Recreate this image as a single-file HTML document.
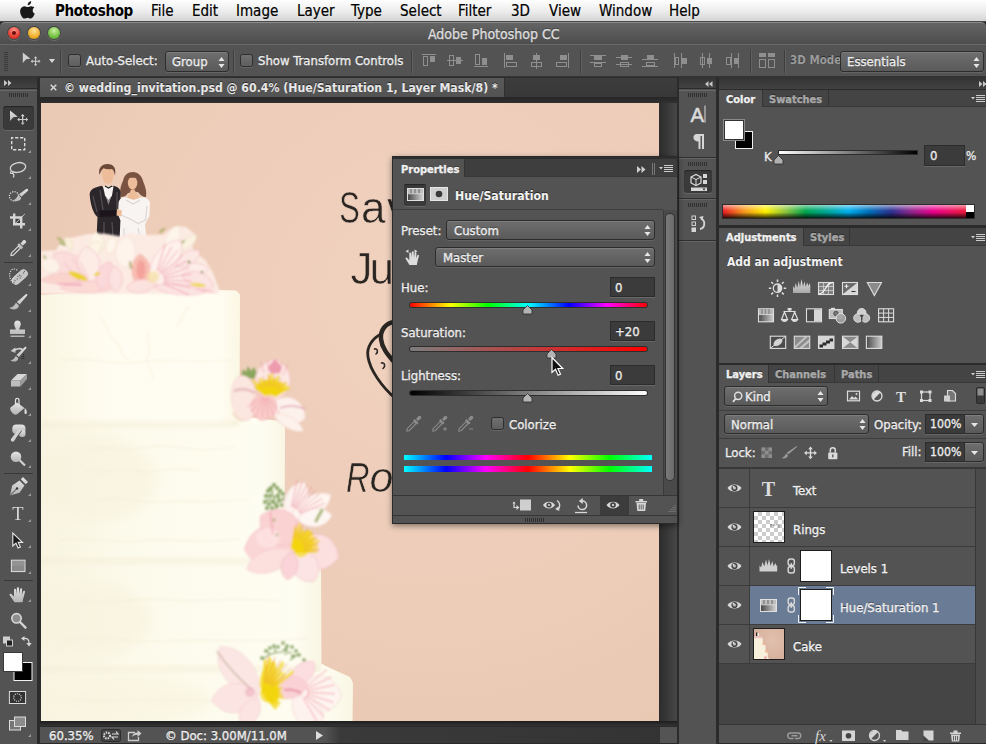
<!DOCTYPE html>
<html><head><meta charset="utf-8"><title>Adobe Photoshop CC</title>
<style>
*{box-sizing:border-box;margin:0;padding:0}
html,body{width:986px;height:744px;overflow:hidden;background:#282828}
body{position:relative;font-family:"DejaVu Sans Condensed","DejaVu Sans","Liberation Sans",sans-serif;font-size:13px;color:#ececec}
div,span,svg,i,b{position:absolute;display:block}
.t{white-space:nowrap;line-height:1;text-shadow:0 -1px 0 rgba(0,0,0,.5);-webkit-text-stroke:.35px currentColor}
.b{font-weight:bold}
#menubar{left:0;top:0;width:986px;height:22px;background:linear-gradient(#fefefe,#ececec 55%,#d4d4d4);border-bottom:1px solid #4a4a4a}
#menubar .t{color:#000;font-size:15px;top:4px;text-shadow:none;-webkit-text-stroke:.2px #000}
#menubar .b{letter-spacing:-.35px;-webkit-text-stroke:0}
.b{-webkit-text-stroke:0}
#titlebar{left:0;top:22px;width:986px;height:22px;background:linear-gradient(#646464,#4d4d4d);border-top:1px solid #8a8a8a;border-radius:5px 5px 0 0}
.tl{width:12px;height:12px;border-radius:6px;top:4px;box-shadow:0 0 0 1px rgba(0,0,0,.35),0 1px 0 1px rgba(255,255,255,.15)}
#optbar{left:0;top:44px;width:986px;height:33px;background:#535353;border-top:1px solid #6a6a6a;border-bottom:1px solid #333}
.vsep{width:2px;background:#3e3e3e;border-right:1px solid #616161}
.cb{width:13px;height:13px;border:1px solid #2e2e2e;border-radius:2.5px;background:linear-gradient(#707070,#5e5e5e);box-shadow:0 1px 0 rgba(255,255,255,.12)}
.dd{border:1px solid #2d2d2d;border-radius:3px;background:linear-gradient(#6e6e6e,#5a5a5a);box-shadow:0 1px 0 rgba(255,255,255,.1),inset 0 1px 0 rgba(255,255,255,.12)}
.dd .t{top:3px}
.ud{width:7px;height:11px}

.grip{width:20px;height:4px;background:repeating-linear-gradient(90deg,#303030 0 1px,transparent 1px 2px)}
.hsep{height:2px;background:#303030;border-bottom:1px solid #646464}
.tabbar{background:#444;border-bottom:1px solid #383838}
.tab{height:100%;top:0;border-right:1px solid #353535}
.tab.on{background:#535353;height:calc(100% + 1px)}
.tab .t{top:4px;font-size:11px;font-weight:bold;color:#a8a8a8}
.tab.on .t{color:#f0f0f0}
.pnl{background:#535353}
.fld{background:#3b3b3b;border:1px solid #2c2c2c;box-shadow:0 1px 0 rgba(255,255,255,.12)}

.row{left:0;width:256px;height:39px;border-bottom:1px solid #3c3c3c;background:#535353}
.row .eyec{left:0;top:0;width:31px;height:38px;border-right:1px solid #3c3c3c;background:#535353}
.row .t{top:15px;font-size:13px;color:#f0f0f0}
.eye{left:8px;top:14px}
.th{border:1px solid #1e1e1e}
</style></head><body>
<!-- ===== MENU BAR ===== -->
<div id="menubar">
<svg style="left:20px;top:1px" width="16" height="19" viewBox="0 0 16 19"><path fill="#1a1a1a" d="M11.2 0.3c.1 1-.3 2-.9 2.700-.7.800-1.700 1.300-2.600 1.200-.1-1 .4-2 .9-2.600.7-.8 1.800-1.300 2.600-1.300zM14.400 6.500c-1 .6-1.700 1.600-1.700 2.900 0 1.500.9 2.700 2.100 3.200-.3.900-.7 1.800-1.300 2.700-.8 1.100-1.600 2.300-2.900 2.300-1.200 0-1.600-.8-3-.8s-1.900.8-3 .8c-1.300 0-2.200-1.200-3-2.400C.3 13.300-.5 10 .7 7.700c.8-1.600 2.300-2.500 3.800-2.500 1.300 0 2.300.9 3.100.9.800 0 2.100-1 3.700-.9 1.300.1 2.400.6 3.100 1.300z"/></svg>
<span class="t b" style="left:55px">Photoshop</span>
<span class="t" style="left:151px">File</span>
<span class="t" style="left:192px">Edit</span>
<span class="t" style="left:236px">Image</span>
<span class="t" style="left:297px">Layer</span>
<span class="t" style="left:351px">Type</span>
<span class="t" style="left:400px">Select</span>
<span class="t" style="left:458px">Filter</span>
<span class="t" style="left:511px">3D</span>
<span class="t" style="left:549px">View</span>
<span class="t" style="left:599px">Window</span>
<span class="t" style="left:669px">Help</span>
</div>
<!-- ===== TITLE BAR ===== -->
<div id="titlebar">
<i class="tl" style="left:8px;background:radial-gradient(circle at 50% 30%,#ff9a8f,#e33e32 60%,#b8261c)"></i>
<i style="left:12px;top:8px;width:4px;height:4px;border-radius:2px;background:#6b0f08"></i>
<i class="tl" style="left:28px;background:radial-gradient(circle at 50% 30%,#ffe29a,#f0b02c 60%,#c98710)"></i>
<i class="tl" style="left:48px;background:radial-gradient(circle at 50% 30%,#c9f0a0,#74c043 60%,#4d9a26)"></i>
<span class="t" style="left:428px;top:4px;font-size:14px;color:#dcdcdc">Adobe Photoshop CC</span>
</div>
<!-- ===== OPTIONS BAR ===== -->
<div id="optbar">
<i style="left:4px;top:7px;width:4px;height:19px;background:repeating-linear-gradient(#3a3a3a 0 1px,transparent 1px 2px)"></i>
<svg style="left:22px;top:7px" width="20" height="16" viewBox="0 0 20 16"><path fill="#cfcfcf" d="M.8 .6l7.600 6.200-4.300.5L.8 11z"/><path fill="#cfcfcf" transform="translate(13.600 8.900) scale(.9) translate(-22.700 -119.200)" d="M22.700 114l1.900 2.200h-1.300v2.700h2.700v-1.300l2.200 1.900-2.200 1.900v-1.300h-2.700v2.700h1.300l-1.900 2.200-1.900-2.200h1.300v-2.700h-2.700v1.300l-2.200-1.900 2.200-1.900v1.300h2.700v-2.700h-1.300z"/></svg>
<svg style="left:49px;top:14px" width="6" height="4"><path fill="#d8d8d8" d="M0 0h6L3 4z"/></svg>
<i class="vsep" style="left:60px;top:5px;height:23px"></i>
<i class="cb" style="left:68px;top:9px"></i>
<span class="t" style="left:86px;top:9px">Auto-Select:</span>
<div class="dd" style="left:165px;top:6px;width:64px;height:21px"><span class="t" style="left:6px">Group</span>
<svg class="ud" style="left:52px;top:5px" viewBox="0 0 7 11"><path fill="#e6e6e6" d="M3.500 0L6.500 4H.5zM3.500 11L6.500 7H.5z"/></svg></div>
<i class="vsep" style="left:233px;top:5px;height:23px"></i>
<i class="cb" style="left:240px;top:9px"></i>
<span class="t" style="left:258px;top:9px">Show Transform Controls</span>
<i class="vsep" style="left:411px;top:5px;height:23px"></i>
<svg id="alsvg" style="left:415px;top:6px" width="365" height="20" viewBox="415 50 365 20"><path d="M422 53.5L436 53.5" stroke="#8f8f8f" stroke-width="1" fill="none"/><rect x="423.5" y="55.5" width="4.0" height="9.0" fill="none" stroke="#8f8f8f" stroke-width="1"/><rect x="430" y="55" width="5.0" height="6.0" fill="#8f8f8f"/><path d="M447 59.5L463 59.5" stroke="#8f8f8f" stroke-width="1" fill="none"/><rect x="449.5" y="54.5" width="4.0" height="10.0" fill="none" stroke="#8f8f8f" stroke-width="1"/><rect x="456" y="56" width="5.0" height="7.0" fill="#8f8f8f"/><path d="M474 65.5L488 65.5" stroke="#8f8f8f" stroke-width="1" fill="none"/><rect x="475.5" y="53.5" width="4.0" height="10.0" fill="none" stroke="#8f8f8f" stroke-width="1"/><rect x="482" y="57" width="5.0" height="7.0" fill="#8f8f8f"/><path d="M504.5 52L504.5 67" stroke="#8f8f8f" stroke-width="1" fill="none"/><rect x="506" y="54" width="7.0" height="5.0" fill="#8f8f8f"/><rect x="506.5" y="61.5" width="10.0" height="4.0" fill="none" stroke="#8f8f8f" stroke-width="1"/><path d="M536.5 52L536.5 68" stroke="#8f8f8f" stroke-width="1" fill="none"/><rect x="533" y="54" width="7.0" height="5.0" fill="#8f8f8f"/><rect x="531.5" y="61.5" width="10.0" height="4.0" fill="none" stroke="#8f8f8f" stroke-width="1"/><path d="M568.5 52L568.5 67" stroke="#8f8f8f" stroke-width="1" fill="none"/><rect x="560" y="54" width="7.0" height="5.0" fill="#8f8f8f"/><rect x="556.5" y="61.5" width="10.0" height="4.0" fill="none" stroke="#8f8f8f" stroke-width="1"/><path d="M590 54.5L606 54.5" stroke="#8f8f8f" stroke-width="1" fill="none"/><path d="M590 61.5L606 61.5" stroke="#8f8f8f" stroke-width="1" fill="none"/><rect x="594" y="55" width="8.0" height="4.0" fill="#8f8f8f"/><rect x="594.5" y="62.5" width="7.0" height="3.0" fill="none" stroke="#8f8f8f" stroke-width="1"/><path d="M616 56.5L632 56.5" stroke="#8f8f8f" stroke-width="1" fill="none"/><path d="M616 63.5L632 63.5" stroke="#8f8f8f" stroke-width="1" fill="none"/><rect x="621" y="54" width="7.0" height="5.0" fill="#8f8f8f"/><rect x="620.5" y="61.5" width="8.0" height="4.0" fill="none" stroke="#8f8f8f" stroke-width="1"/><path d="M642 58.5L658 58.5" stroke="#8f8f8f" stroke-width="1" fill="none"/><path d="M642 65.5L658 65.5" stroke="#8f8f8f" stroke-width="1" fill="none"/><rect x="647" y="54" width="7.0" height="4.0" fill="#8f8f8f"/><rect x="646.5" y="61.5" width="8.0" height="3.0" fill="none" stroke="#8f8f8f" stroke-width="1"/><path d="M674.5 52L674.5 67" stroke="#8f8f8f" stroke-width="1" fill="none"/><path d="M681.5 52L681.5 67" stroke="#8f8f8f" stroke-width="1" fill="none"/><rect x="675.5" y="56.5" width="3.0" height="7.0" fill="none" stroke="#8f8f8f" stroke-width="1"/><rect x="682" y="57" width="5.0" height="6.0" fill="#8f8f8f"/><path d="M702.5 52L702.5 67" stroke="#8f8f8f" stroke-width="1" fill="none"/><path d="M709.5 52L709.5 67" stroke="#8f8f8f" stroke-width="1" fill="none"/><rect x="700.5" y="56.5" width="4.0" height="7.0" fill="none" stroke="#8f8f8f" stroke-width="1"/><rect x="707" y="57" width="5.0" height="6.0" fill="#8f8f8f"/><path d="M731.5 52L731.5 67" stroke="#8f8f8f" stroke-width="1" fill="none"/><path d="M738.5 52L738.5 67" stroke="#8f8f8f" stroke-width="1" fill="none"/><rect x="726.5" y="56.5" width="4.0" height="7.0" fill="none" stroke="#8f8f8f" stroke-width="1"/><rect x="734" y="57" width="4.0" height="6.0" fill="#8f8f8f"/><rect x="759" y="52" width="7.0" height="4.0" fill="#8f8f8f"/><rect x="759.5" y="58.5" width="6.0" height="8.0" fill="none" stroke="#8f8f8f" stroke-width="1"/><rect x="768" y="52" width="7.0" height="4.0" fill="#8f8f8f"/><rect x="768.5" y="58.5" width="6.0" height="8.0" fill="none" stroke="#8f8f8f" stroke-width="1"/></svg>
<i class="vsep" style="left:580px;top:5px;height:23px"></i>
<i class="vsep" style="left:750px;top:5px;height:23px"></i>
<i class="vsep" style="left:784px;top:5px;height:23px"></i>
<span class="t b" style="left:790px;top:10px;font-size:11.500px;color:#9b9b9b;width:49.500px;overflow:hidden">3D Mode:</span>
<div class="dd" style="left:840px;top:6px;width:144px;height:21px"><span class="t" style="left:6px">Essentials</span>
<svg class="ud" style="left:132px;top:5px" viewBox="0 0 7 11"><path fill="#e6e6e6" d="M3.500 0L6.500 4H.5zM3.500 11L6.500 7H.5z"/></svg></div>
</div>

<!-- ===== DOCUMENT WINDOW ===== -->
<div id="doc" style="left:40px;top:77px;width:637px;height:667px;background:#2c2c2c">
<i style="left:0;top:0;width:637px;height:20px;background:linear-gradient(#3c3c3c,#383838);border-top:1px solid #2e2e2e"></i>
<div style="left:0;top:1px;width:465px;height:19px;background:linear-gradient(#595959,#535353);border-right:1px solid #303030">
<svg style="left:10px;top:6px" width="7" height="7"><path d="M.7.7l5.600 5.600M6.300.7L.7 6.300" stroke="#d8d8d8" stroke-width="1.500" fill="none"/></svg>
<span class="t b" style="left:24px;top:4px;font-size:12.200px;color:#e8e8e8">© wedding_invitation.psd @ 60.4% (Hue/Saturation 1, Layer Mask/8) *</span>
</div>
<i style="left:0;top:20px;width:637px;height:6px;background:linear-gradient(#262626,#303030)"></i>
<!-- scroll track -->
<i style="left:619px;top:26px;width:18px;height:624px;background:linear-gradient(90deg,#2c2c2c,#474747)"></i>
<i style="left:0;top:644px;width:637px;height:6px;background:linear-gradient(#1e1e1e,#383838)"></i>
<!-- status bar -->
<div id="status" style="left:0;top:649px;width:637px;height:18px;background:linear-gradient(90deg,#535353 0,#535353 285px,#3a3a3a 300px,#333 100%);border-top:1px solid #2a2a2a;border-bottom:1px solid #2a2a2a">
<span class="t" style="left:9px;top:2px;font-size:13px">60.35%</span>
<svg style="left:61px;top:2px" width="20" height="13"><rect x=".5" y=".5" width="19" height="12" rx="2" fill="#444" stroke="#2c2c2c"/><circle cx="6" cy="6.500" r="3" fill="none" stroke="#ddd" stroke-width="2" stroke-dasharray="1.500 1"/><path d="M11 5h6l-2-2.500M17 8h-6l2 2.500" fill="none" stroke="#ddd" stroke-width="1.200"/></svg>
<svg style="left:87px;top:1px" width="15" height="14"><path d="M8 4.500H1.500v8h10V9" fill="none" stroke="#ccc" stroke-width="1.300"/><path d="M5 9c.5-3 2.500-4.500 5.500-4.500V2L14.500 5.500 10.500 9V6.800C8 6.800 6.500 7.500 5 9z" fill="#ccc"/></svg>
<span class="t" style="left:125px;top:2px;font-size:13px">© Doc: 3.00M/11.0M</span>
<svg style="left:276px;top:4px" width="7" height="9"><path d="M0 0l7 4.500L0 9z" fill="#ddd"/></svg>
<i style="left:620px;top:0;width:17px;height:16px;background:#545454"></i>
</div>
<!-- canvas image -->
<svg id="cv" style="left:1px;top:26px" width="618" height="618" viewBox="41 103 618 618">
<defs>
<radialGradient id="bgg" cx="430" cy="300" r="560" gradientUnits="userSpaceOnUse"><stop offset="0" stop-color="#f0d2bf"/><stop offset=".6" stop-color="#edccb8"/><stop offset="1" stop-color="#e8c6b0"/></radialGradient>
<linearGradient id="ck" x1="0" y1="0" x2="1" y2="0"><stop offset="0" stop-color="#f8f4e1"/><stop offset=".35" stop-color="#fcfaeb"/><stop offset=".9" stop-color="#fefdf1"/><stop offset="1" stop-color="#f9f6e4"/></linearGradient>
<linearGradient id="ck1" x1="0" y1="0" x2="1" y2="0"><stop offset="0" stop-color="#faf6e3"/><stop offset=".35" stop-color="#fffdf1"/><stop offset=".9" stop-color="#fffdf2"/><stop offset="1" stop-color="#fbf7e4"/></linearGradient>
<radialGradient id="pk" cx=".3" cy=".5" r=".8"><stop offset="0" stop-color="#fdeae4"/><stop offset="1" stop-color="#f7c6c8"/></radialGradient>
<radialGradient id="pk2" cx=".4" cy=".5" r=".8"><stop offset="0" stop-color="#fbdcd8"/><stop offset="1" stop-color="#f6c2c6"/></radialGradient>
<radialGradient id="wh" cx=".4" cy=".5" r=".8"><stop offset="0" stop-color="#fff6ee"/><stop offset="1" stop-color="#fbe2de"/></radialGradient>
<filter id="b1" x="-20%" y="-20%" width="140%" height="140%"><feGaussianBlur stdDeviation=".8"/></filter>
<filter id="b2" x="-20%" y="-20%" width="140%" height="140%"><feGaussianBlur stdDeviation="2.500"/></filter>
<filter id="b3" x="-30%" y="-30%" width="160%" height="160%"><feGaussianBlur stdDeviation="6"/></filter>
<filter id="b0" x="-10%" y="-10%" width="120%" height="120%"><feGaussianBlur stdDeviation=".45"/></filter>
</defs>
<rect x="41" y="103" width="618" height="618" fill="url(#bgg)"/>
<g font-family="Liberation Sans,sans-serif" fill="#2b2523" stroke="#efd0bc" stroke-width=".6" filter="url(#b0)">
<text x="339.300" y="223.300" font-size="44" textLength="20.500" lengthAdjust="spacingAndGlyphs">S</text>
<text x="361" y="223.300" font-size="44" letter-spacing="1.500">ave the</text>
<text x="350.500" y="283.500" font-size="44">J</text>
<text x="369.500" y="283.500" font-size="44" letter-spacing="2">uly 12</text>
<text x="346" y="492" font-size="43" font-style="italic" textLength="23.500" lengthAdjust="spacingAndGlyphs">R</text>
<text x="369.500" y="492" font-size="43" font-style="italic" letter-spacing="1">obert</text>
</g>
<g fill="none" stroke="#2b2523" stroke-linecap="round" filter="url(#b0)"><path d="M394 322c-8 1-14 8-13 17 1 10 8 17 14 24" stroke-width="4.500"/><path d="M381 334c-8 4-15 13-13 23 2 13 14 30 27 41" stroke-width="2.800"/><path d="M374.500 349c3-1 4 3 1.500 5M381.500 363c3-1 4.500 3 1.500 5.500" stroke-width="1.600"/></g>
<path d="M41 664H322l8 4 20 9 3 6-.5 38H41z" fill="url(#ck)"/>
<path d="M41 555H286l30 5 5 6 .5 100-2 6H41z" fill="url(#ck)"/>
<path d="M41 416H240l40 5 5 6-.5 130-3 6H41z" fill="url(#ck)"/>
<path d="M41 295C90 291 180 289 236 290.500l4 4 -.5 126-2 4H41z" fill="url(#ck1)"/>
<g filter="url(#b2)" fill="none" stroke-linecap="round">
<path d="M41 424H238" stroke="#f1ead0" stroke-width="3" opacity=".8"/>
<path d="M41 561H284" stroke="#f1ead0" stroke-width="3" opacity=".8"/>
<path d="M41 669H320" stroke="#f1ead0" stroke-width="3" opacity=".8"/>
</g>
<g filter="url(#b3)"><ellipse cx="95" cy="480" rx="60" ry="40" fill="#f7f2dc" opacity=".6"/><ellipse cx="90" cy="620" rx="60" ry="35" fill="#f7f2dc" opacity=".6"/><ellipse cx="120" cy="700" rx="90" ry="22" fill="#f8f3de" opacity=".6"/></g>
<g fill="none" stroke="#f3ecd4" stroke-width="1.200" opacity=".55" filter="url(#b1)"><path d="M90 448c20-3 30 3 45 1s20-5 40-2 35 4 60 0M85 470c20 4 40-2 55 1s30-6 60 0M100 500c25-5 40 4 60 2s50 2 90-3M60 540c30-4 50 4 80 1s60 3 100-2M80 600c30 5 60-3 90 0s70-4 110 1M60 640c40-5 70 4 110 1s90 3 140-3M70 700c40 4 80-3 120 0s100-4 150 0M100 318c10 8 5 14 14 22s6 16 16 20M150 330c-8 10 4 16-2 26s8 14 4 24M60 360c30-4 50 6 80 2s60 2 90-2M190 306c-10 6-6 16-14 20"/></g>
<g filter="url(#b0)">
<path d="M121 197c-2-6 0-12 2-16 1-6 5-9 10-9s9 4 10 9c2 5 4 10 3 16-3 0-6-2-8-5l-10 1c-2 3-4 4-7 4z" fill="#7a5242"/>
<path d="M96.500 239l1-22c-4-3-7-12-7.800-22-.3-5 4-7.500 12-9.200l5.800 6 5.500-6c4 .8 7 2.500 7.500 6l.5 20-.5 27.200z" fill="#2a2529"/>
<path d="M93 196l4 16M100 190l3 20M117 192l0 18M104 222l0 14M112 222l1 14" stroke="#5c565c" stroke-width="1.300" fill="none" opacity=".8"/>
<path d="M99 210.500l20-.5v6l-19 1z" fill="#1c181c"/>
<path d="M103 186.500h10.500l-1.500 9-3.500 6-3.500-6z" fill="#f6f3f1"/><path d="M105.500 196l3 9 3-9-3 4z" fill="#8a8488"/>
<path d="M105 186l3.500 2 3.500-2" stroke="#222" stroke-width="1.200" fill="none"/>
<path d="M102 172c0-4 2.500-5.500 6-5.500s5.800 2 5.800 6c0 5-1.500 9-3 11h-5.500c-2-2-3.300-6-3.300-11.500z" fill="#edbd9a"/>
<path d="M99.500 175c-1.500-7 2-11 8-11s9 4 7.500 11.500c-.8-3.500-1.500-5.500-3-6.500-3 .5-6 .3-8.500-.8-1.800 1.500-3 3.800-4 6.800z" fill="#6a4838"/>
<ellipse cx="132.600" cy="183" rx="4.800" ry="6.400" fill="#edbd9a"/>
<path d="M127 199.500c1-4 3-7 4-10h3.500c1 3 4 6 6 10z" fill="#edbd9a"/>
<path d="M128 178c1-3 3-4 5-4s4 1.500 4.500 4c-3-.5-6-.5-9.500 0z" fill="#7a5242"/>
<path d="M118.500 204c0-5 4-7.500 8-6.500l7 2.500 7-2.500c4-1 9 1 9.500 6l-.5 12-4.500 9 1.500 15h-27l1-19-2.500-6z" fill="#f7f4f2"/>
<path d="M121 215l9 4 9 5M147 206l-1.500 14-8.500 4M126 200l7 4 7-4M124 228l0 10M138 228l2 10" stroke="#ddd6d3" stroke-width="1.200" fill="none"/>
<path d="M117 209l5 1.500-.8 6-4.700-1z" fill="#edbd9a"/>
</g>
<g filter="url(#b1)"><path d="M41 251L56 250.500 59.500 244 65 238 73 237.500 88 234 104 233.500 121 236.500 131 233 148 235 163 235 170 229 175 226 186 227 196 235 191 242 194 251 206 261 213 273 219 289V294H41z" fill="#fcebe3"/><path d="M0 0C5.5 -8.7 17.6 -8.4 22.0 0C17.6 8.4 5.5 8.7 0 0z" transform="translate(98 254) rotate(-95)" fill="#fdf6e8" stroke="#eee0c8" stroke-width="0.7" opacity="1"/><path d="M0 0C5.0 -8.1 16.0 -7.8 20.0 0C16.0 7.8 5.0 8.1 0 0z" transform="translate(88 258) rotate(-55)" fill="#fdf4e6" stroke="#eee0c8" stroke-width="0.7" opacity="1"/><path d="M0 0C4.5 -6.8 14.4 -6.6 18.0 0C14.4 6.6 4.5 6.8 0 0z" transform="translate(108 254) rotate(-70)" fill="#fef6ea" stroke="#eee0c8" stroke-width="0.7" opacity="1"/><path d="M0 0C3.5 -5.0 11.2 -4.8 14.0 0C11.2 4.8 3.5 5.0 0 0z" transform="translate(72 250) rotate(-115)" fill="#fbf0dc" stroke="#e8dcc0" stroke-width="0.7" opacity="1"/><path d="M0 0C7.8 -9.3 24.8 -9.0 31.0 0C24.8 9.0 7.8 9.3 0 0z" transform="translate(166 254) rotate(-66)" fill="#fdf4ea" stroke="#f0dcd0" stroke-width="0.7" opacity="1"/><path d="M0 0C5.5 -6.2 17.6 -6.0 22.0 0C17.6 6.0 5.5 6.2 0 0z" transform="translate(180 250) rotate(-42)" fill="#fbf2e2" stroke="#ecdcc8" stroke-width="0.7" opacity="1"/><path d="M0 0C8.0 -13.6 25.6 -13.2 32.0 0C25.6 13.2 8.0 13.6 0 0z" transform="translate(124 268) rotate(-85)" fill="#fef4ec" stroke="#f6d8d4" stroke-width="0.7" opacity="1"/><path d="M58 238l6 4M60 243l5 2M160 232l4-3M178 246l6-5M44 256l5 7M94 258l3 6M143 258l-2 8M130 262l1 6" stroke="#a6ae62" stroke-width="2" stroke-linecap="round"/><path d="M0 0C11.5 -16.1 36.8 -15.6 46.0 0C36.8 15.6 11.5 16.1 0 0z" transform="translate(90 282) rotate(-142)" fill="#fbdedb" stroke="#f3bcc4" stroke-width="0.7" opacity="1"/><path d="M0 0C9.0 -14.9 28.8 -14.4 36.0 0C28.8 14.4 9.0 14.9 0 0z" transform="translate(92 282) rotate(-100)" fill="#fdebe6" stroke="#f3bcc4" stroke-width="0.7" opacity="1"/><path d="M0 0C5.0 -9.9 16.0 -9.6 20.0 0C16.0 9.6 5.0 9.9 0 0z" transform="translate(41 262) rotate(20)" fill="#fdf2e8" stroke="#f0dcd0" stroke-width="0.7" opacity="1"/><path d="M0 0C11.0 -7.4 35.2 -7.2 44.0 0C35.2 7.2 11.0 7.4 0 0z" transform="translate(41 280) rotate(-4)" fill="#fad4cc" stroke="#f3bcc4" stroke-width="0.7" opacity="1"/><path d="M0 0C15.0 -7.4 48.0 -7.2 60.0 0C48.0 7.2 15.0 7.4 0 0z" transform="translate(60 288) rotate(-2)" fill="#fbdad4" stroke="#f3bcc4" stroke-width="0.7" opacity="1"/><path d="M0 0C7.5 -11.2 24.0 -10.8 30.0 0C24.0 10.8 7.5 11.2 0 0z" transform="translate(100 290) rotate(-70)" fill="#fbd8da" stroke="#f3bcc4" stroke-width="0.7" opacity="1"/><path d="M0 0C6.5 -9.3 20.8 -9.0 26.0 0C20.8 9.0 6.5 9.3 0 0z" transform="translate(116 292) rotate(-92)" fill="#fce2e0" stroke="#f3bcc4" stroke-width="0.7" opacity="1"/><path d="M64 262l16 20M72 258l16 22M80 262l8 16" stroke="#f3a6b8" stroke-width=".9" opacity=".7"/><ellipse cx="78" cy="276" rx="10" ry="3" transform="rotate(22 78 276)" fill="#eed232"/><ellipse cx="97" cy="274" rx="3" ry="1.600" transform="rotate(-20 97 274)" fill="#eed232"/><path d="M58 284l24 1" stroke="#f096b6" stroke-width="1.600" opacity=".85"/><path d="M0 0C9.0 -12.4 28.8 -12.0 36.0 0C28.8 12.0 9.0 12.4 0 0z" transform="translate(143 290) rotate(-95)" fill="#f8beb2" stroke="#f0a8a0" stroke-width="0.7" opacity="1"/><ellipse cx="141" cy="270" rx="4.500" ry="10" fill="#f39a94" opacity=".75"/><path d="M0 0C12.5 -14.9 40.0 -14.4 50.0 0C40.0 14.4 12.5 14.9 0 0z" transform="translate(150 280) rotate(-52)" fill="#fef2ec" stroke="#f3bcc4" stroke-width="0.7" opacity="1"/><path d="M0 0C14.5 -14.9 46.4 -14.4 58.0 0C46.4 14.4 14.5 14.9 0 0z" transform="translate(152 282) rotate(-14)" fill="#fdeeea" stroke="#f3bcc4" stroke-width="0.7" opacity="1"/><path d="M0 0C13.0 -7.4 41.6 -7.2 52.0 0C41.6 7.2 13.0 7.4 0 0z" transform="translate(154 287) rotate(5)" fill="#fce4e2" stroke="#f3bcc4" stroke-width="0.7" opacity="1"/><path d="M0 0C7.5 -8.7 24.0 -8.4 30.0 0C24.0 8.4 7.5 8.7 0 0z" transform="translate(156 284) rotate(172)" fill="#fce2de" stroke="#f3bcc4" stroke-width="0.7" opacity="1"/><path d="M0 0C8.5 -11.2 27.2 -10.8 34.0 0C27.2 10.8 8.5 11.2 0 0z" transform="translate(182 274) rotate(22)" fill="#fce4e2" stroke="#f3bcc4" stroke-width="0.7" opacity="1"/><path d="M0 0C7.0 -8.7 22.4 -8.4 28.0 0C22.4 8.4 7.0 8.7 0 0z" transform="translate(176 266) rotate(-32)" fill="#fce8e4" stroke="#f3bcc4" stroke-width="0.7" opacity="1"/><path d="M157.2 270.0L165.4 243.9M158.9 270.7L171.8 246.6M160.6 271.8L177.6 250.5M161.9 273.1L182.6 255.3M163.1 274.7L186.6 260.9M163.9 276.5L189.6 267.2M164.4 278.3L191.3 274.0M164.5 280.3L191.8 280.9M164.3 282.2L191.0 287.8M163.7 284.0L188.9 294.5" stroke="#ec8498" stroke-width="0.9" stroke-dasharray="2.500 1.500" fill="none" stroke-linecap="round"/><circle cx="153" cy="277" r="6" fill="#f6e2a8" opacity=".75"/><ellipse cx="198" cy="285" rx="8" ry="2" transform="rotate(8 198 285)" fill="#eed656" opacity=".9"/><path d="M196 289l18 3" stroke="#f2a0b4" stroke-width="1.200" opacity=".8"/><circle cx="189" cy="262" r="1.500" fill="#8a8a50"/><circle cx="202" cy="272" r="1.300" fill="#8a8a50"/></g>
<g filter="url(#b1)"><path d="M241 376l2-7 3 3 2-6 3 5 3-4 2 5 3-2-1 5-5 4z" fill="#8aa55c"/><ellipse cx="244" cy="398" rx="12.500" ry="22.500" transform="rotate(-6 244 398)" fill="#fce6e0" stroke="#f3cec8" stroke-width=".7"/><path d="M234 391c7-3 14-2 21 2" stroke="#d4929a" stroke-width="2.600" fill="none" opacity=".5"/><path d="M233 412c2 5 6 8 10 9" stroke="#e8c0a0" stroke-width="1.500" fill="none" opacity=".7"/><path d="M0 0C9.5 -18.6 30.4 -18.0 38.0 0C30.4 18.0 9.5 18.6 0 0z" transform="translate(270 404) rotate(22)" fill="#fdf1ec" stroke="#f2d0cc" stroke-width="0.7" opacity="1"/><path d="M0 0C8.5 -7.4 27.2 -7.2 34.0 0C27.2 7.2 8.5 7.4 0 0z" transform="translate(274 414) rotate(30)" fill="#fdf2ec" stroke="#f2d4cc" stroke-width="0.7" opacity="1"/><path d="M280 408c8-3 16-3 25 1" stroke="#dc98a8" stroke-width="1.500" fill="none" opacity=".8"/><path d="M0 0C10.8 -23.6 34.4 -22.8 43.0 0C34.4 22.8 10.8 23.6 0 0z" transform="translate(270 402) rotate(-83)" fill="#fce8e4" stroke="#f4c4cc" stroke-width="0.7" opacity="1"/><path d="M268 367l7-8 7 8-2 6-9 1z" fill="#ec92a8" opacity=".9"/><path d="M263.5 371.9L261.2 361.8M268.5 371.2L267.9 360.9M273.5 371.4L274.8 361.1M278.4 372.5L281.5 362.5M283.1 374.3L287.8 365.1" stroke="#ee96a8" stroke-width="0.8" stroke-dasharray="2.500 1.500" fill="none" stroke-linecap="round"/><path d="M0 0C7.2 -17.4 23.2 -16.8 29.0 0C23.2 16.8 7.2 17.4 0 0z" transform="translate(267 392) rotate(102)" fill="#f9ceca" stroke="#f0b0b4" stroke-width="0.7" opacity="1"/><path d="M268.8 397.9L279.1 412.7M267.6 398.5L273.8 415.4M266.4 398.8L268.0 416.7M265.2 398.7L262.0 416.5M264.0 398.4L256.4 414.7M262.9 397.7L251.3 411.5M262.1 396.8L247.3 407.1" stroke="#ee8ea0" stroke-width="0.8" stroke-dasharray="2.500 1.500" fill="none" stroke-linecap="round"/><ellipse cx="271" cy="388" rx="12" ry="8" fill="#f5dc3a" opacity=".75"/><path d="M265.4 395.1L255.5 386.8M266.0 394.6L253.4 380.7M266.6 394.0L259.0 382.9M267.3 393.6L259.9 378.8M268.1 393.3L263.7 380.2M268.9 393.1L266.5 380.3M269.7 393.0L268.8 375.4M270.5 393.0L272.1 374.4M271.3 393.2L274.6 378.9M272.1 393.4L278.5 376.4M272.9 393.7L279.3 382.0M273.6 394.2L282.0 382.7M274.2 394.7L285.6 383.0M274.7 395.3L286.8 386.0M275.2 396.0L289.1 387.9" stroke="#f3d50e" stroke-width="2.2" fill="none" stroke-linecap="round"/><path d="M263.1 388.2L256.9 379.3M266.1 386.7L262.6 376.4M269.4 386.0L268.8 375.2M272.7 386.3L275.1 375.8M275.8 387.5L281.1 378.1M278.5 389.5L286.1 381.9" stroke="#ee8a70" stroke-width="0.7" stroke-dasharray="2.500 1.500" fill="none" stroke-linecap="round"/></g>
<g filter="url(#b1)"><path d="M276 510l-2-12-3-8M274 498l6-6M273 492l-5-4M275 504l8-4M272 500l-6 0" stroke="#88a266" stroke-width="1.300" fill="none"/><circle cx="271" cy="488" r="2" fill="#86a264"/><circle cx="274" cy="485" r="2" fill="#86a264"/><circle cx="277" cy="488" r="2" fill="#86a264"/><circle cx="268" cy="491" r="2" fill="#86a264"/><circle cx="280" cy="491" r="2" fill="#86a264"/><circle cx="283" cy="494" r="2" fill="#86a264"/><circle cx="266" cy="496" r="2" fill="#86a264"/><circle cx="270" cy="496" r="2" fill="#86a264"/><circle cx="278" cy="496" r="2" fill="#86a264"/><circle cx="265" cy="502" r="2" fill="#86a264"/><circle cx="269" cy="504" r="2" fill="#86a264"/><circle cx="273" cy="502" r="2" fill="#86a264"/><circle cx="279" cy="500" r="2" fill="#86a264"/><circle cx="284" cy="499" r="2" fill="#86a264"/><circle cx="267" cy="508" r="2" fill="#86a264"/><circle cx="272" cy="508" r="2" fill="#86a264"/><circle cx="277" cy="506" r="2" fill="#86a264"/><circle cx="282" cy="505" r="2" fill="#86a264"/><circle cx="286" cy="507" r="2" fill="#86a264"/><path d="M0 0C10.0 -14.9 32.0 -14.4 40.0 0C32.0 14.4 10.0 14.9 0 0z" transform="translate(287 518) rotate(-64)" fill="#fdf3ee" stroke="#f2d4d0" stroke-width="0.7" opacity="1"/><path d="M0 0C11.5 -13.6 36.8 -13.2 46.0 0C36.8 13.2 11.5 13.6 0 0z" transform="translate(291 518) rotate(-30)" fill="#fef6f0" stroke="#f2d4d0" stroke-width="0.7" opacity="1"/><path d="M0 0C8.5 -12.4 27.2 -12.0 34.0 0C27.2 12.0 8.5 12.4 0 0z" transform="translate(298 520) rotate(-8)" fill="#fef6f2" stroke="#f2d4d0" stroke-width="0.7" opacity="1"/><path d="M291.6 506.3L297.2 480.9M293.2 506.7L302.2 482.4M294.7 507.4L307.0 484.5M296.1 508.3L311.4 487.3M297.3 509.4L315.4 490.6M298.4 510.6L318.9 494.5M299.4 511.9L321.8 498.8M300.1 513.4L324.1 503.5" stroke="#ea8094" stroke-width="0.9" stroke-dasharray="2.500 1.500" fill="none" stroke-linecap="round"/><path d="M316 521l6-11" stroke="#a9b872" stroke-width="3" stroke-linecap="round"/><path d="M0 0C14.0 -28.5 44.8 -27.6 56.0 0C44.8 27.6 14.0 28.5 0 0z" transform="translate(300 542) rotate(172)" fill="#fbd6d6" stroke="#f2bcc4" stroke-width="0.7" opacity="1"/><path d="M0 0C12.0 -23.6 38.4 -22.8 48.0 0C38.4 22.8 12.0 23.6 0 0z" transform="translate(302 540) rotate(-150)" fill="#fad2d2" stroke="#f2bcc4" stroke-width="0.7" opacity="1"/><path d="M0 0C12.5 -14.9 40.0 -14.4 50.0 0C40.0 14.4 12.5 14.9 0 0z" transform="translate(294 552) rotate(160)" fill="#fce0de" stroke="#f4c8cc" stroke-width="0.7" opacity="1"/><ellipse cx="268" cy="538" rx="12" ry="10" fill="#fde6e4" opacity=".7"/><path d="M0 0C11.0 -23.6 35.2 -22.8 44.0 0C35.2 22.8 11.0 23.6 0 0z" transform="translate(296 546) rotate(15)" fill="#fce0e0" stroke="#f4c0c8" stroke-width="0.7" opacity="1"/><path d="M0 0C9.0 -17.4 28.8 -16.8 36.0 0C28.8 16.8 9.0 17.4 0 0z" transform="translate(296 550) rotate(60)" fill="#fce4e4" stroke="#f4c0c8" stroke-width="0.7" opacity="1"/><path d="M0 0C7.0 -11.2 22.4 -10.8 28.0 0C22.4 10.8 7.0 11.2 0 0z" transform="translate(292 552) rotate(100)" fill="#fad4d8" stroke="#f2b8c0" stroke-width="0.7" opacity="1"/><ellipse cx="304" cy="544" rx="9" ry="14" transform="rotate(25 304 544)" fill="#f5dc3a" opacity=".8"/><path d="M291.7 548.1L295.3 527.7M292.2 548.2L299.6 524.4M292.7 548.4L301.7 528.5M293.1 548.6L303.4 531.9M293.5 548.9L308.1 531.0M293.9 549.2L310.9 533.0M294.2 549.6L309.2 538.6M294.5 550.1L315.7 538.3M294.7 550.5L318.5 541.0M294.9 551.0L316.5 545.4M295.0 551.5L317.6 548.6M295.0 552.0L316.4 552.0" stroke="#f3d50e" stroke-width="2.2" fill="none" stroke-linecap="round"/><path d="M294.2 537.6L296.9 522.4M297.0 538.4L303.1 524.3M299.5 539.9L308.7 527.5M301.7 541.9L313.4 532.0M303.3 544.3L317.0 537.4M304.3 547.1L319.2 543.5M304.6 550.0L320.0 550.0" stroke="#ee8a70" stroke-width="0.7" stroke-dasharray="2.500 1.500" fill="none" stroke-linecap="round"/><path d="M270 512l3 22" stroke="#f09aac" stroke-width="1.500" opacity=".7"/><circle cx="274" cy="520" r="1.500" fill="#a8b070"/><circle cx="277" cy="535" r="1.300" fill="#a8b070"/></g>
<g filter="url(#b1)"><path d="M262 660c6-6 12-8 20-8M282 652l6-6M284 654l8-2M276 653l-2-6M270 655l-3-5M290 660l8-6" stroke="#88a266" stroke-width="1.200" fill="none"/><circle cx="262" cy="658" r="1.8" fill="#86a264"/><circle cx="266" cy="651" r="1.8" fill="#86a264"/><circle cx="270" cy="648" r="1.8" fill="#86a264"/><circle cx="274" cy="646" r="1.8" fill="#86a264"/><circle cx="278" cy="647" r="1.8" fill="#86a264"/><circle cx="283" cy="643" r="1.8" fill="#86a264"/><circle cx="287" cy="646" r="1.8" fill="#86a264"/><circle cx="292" cy="647" r="1.8" fill="#86a264"/><circle cx="296" cy="651" r="1.8" fill="#86a264"/><circle cx="299" cy="655" r="1.8" fill="#86a264"/><circle cx="304" cy="660" r="1.8" fill="#86a264"/><circle cx="293" cy="656" r="1.8" fill="#86a264"/><circle cx="286" cy="650" r="1.8" fill="#86a264"/><path d="M0 0C15.5 -19.8 49.6 -19.2 62.0 0C49.6 19.2 15.5 19.8 0 0z" transform="translate(258 696) rotate(-128)" fill="#fce6e4" stroke="#f3ccd0" stroke-width="0.7" opacity="1"/><path d="M0 0C11.5 -19.8 36.8 -19.2 46.0 0C36.8 19.2 11.5 19.8 0 0z" transform="translate(258 696) rotate(175)" fill="#fce4e2" stroke="#f3ccd0" stroke-width="0.7" opacity="1"/><path d="M0 0C8.0 -12.4 25.6 -12.0 32.0 0C25.6 12.0 8.0 12.4 0 0z" transform="translate(258 698) rotate(120)" fill="#fce4e2" stroke="#f3ccd0" stroke-width="0.7" opacity="1"/><path d="M217 651c8 12 20 26 34 38" stroke="#b89a80" stroke-width="1.600" fill="none" opacity=".55"/><path d="M0 0C12.0 -24.8 38.4 -24.0 48.0 0C38.4 24.0 12.0 24.8 0 0z" transform="translate(294 692) rotate(5)" fill="#fef5f0" stroke="#f3d4d0" stroke-width="0.7" opacity="1"/><path d="M0 0C10.5 -17.4 33.6 -16.8 42.0 0C33.6 16.8 10.5 17.4 0 0z" transform="translate(294 696) rotate(50)" fill="#fef2ee" stroke="#f3d4d0" stroke-width="0.7" opacity="1"/><path d="M0 0C8.5 -12.4 27.2 -12.0 34.0 0C27.2 12.0 8.5 12.4 0 0z" transform="translate(290 686) rotate(-45)" fill="#fcdee0" stroke="#f3c4cc" stroke-width="0.7" opacity="1"/><path d="M305.8 687.1L326.2 670.0M306.8 688.7L330.8 677.2M307.4 690.5L333.5 685.2M307.6 692.4L334.2 693.7M307.3 694.2L332.7 702.1M306.5 696.0L329.2 709.8M305.3 697.4L323.9 716.5M303.8 698.6L317.1 721.6" stroke="#ee7e90" stroke-width="0.9" stroke-dasharray="2.500 1.500" fill="none" stroke-linecap="round"/><path d="M0 0C9.5 -14.9 30.4 -14.4 38.0 0C30.4 14.4 9.5 14.9 0 0z" transform="translate(270 690) rotate(-8)" fill="#fad2d6" stroke="#f2bcc6" stroke-width="0.7" opacity="1"/><path d="M284 690c6-1 12 0 17 3" stroke="#ea98aa" stroke-width="2.200" fill="none"/><ellipse cx="268" cy="676" rx="7" ry="15" transform="rotate(22 268 676)" fill="#f5dc3a" opacity=".85"/><ellipse cx="270" cy="694" rx="10" ry="9" fill="#f5dc3a" opacity=".85"/><path d="M262.5 692.0L265.3 660.5M263.2 692.1L269.9 658.7M263.8 692.3L273.7 661.7M264.5 692.5L275.1 669.0M265.1 692.8L282.8 663.0M265.6 693.2L281.4 672.4M266.1 693.7L284.8 674.1M266.6 694.1L293.1 671.9" stroke="#f3d50e" stroke-width="2.2" fill="none" stroke-linecap="round"/><path d="M265.8 690.6L277.7 686.3M265.9 691.2L281.6 688.1M266.0 691.8L279.4 691.2M266.0 692.4L281.5 694.1M265.9 693.0L283.2 697.7M265.7 693.6L277.5 698.8M265.4 694.1L279.1 702.9M265.0 694.6L277.6 705.7M264.6 695.1L275.5 708.1" stroke="#f3d50e" stroke-width="2.2" fill="none" stroke-linecap="round"/><path d="M264.7 682.1L268.3 656.4M266.7 682.6L274.7 657.9M268.6 683.4L280.8 660.4M270.4 684.5L286.4 664.1M271.9 686.0L291.2 668.6" stroke="#ec8a60" stroke-width="0.8" stroke-dasharray="2.500 1.500" fill="none" stroke-linecap="round"/><circle cx="250" cy="692" r="5" fill="#e8a4b4" opacity=".5"/></g>
</svg>
</div>

<!-- ===== RIGHT DOCK ===== -->
<div id="dock" style="left:677px;top:77px;width:42px;height:667px;background:#535353;border-left:2px solid #2b2b2b;border-right:3px solid #2b2b2b">
<i style="left:0;top:0;width:37px;height:12px;background:linear-gradient(#333,#424242);border-bottom:1px solid #2b2b2b"></i>
<svg style="left:26px;top:4px" width="8" height="6"><path d="M3.500 0L0 3l3.500 3zM7.500 0L4 3l3.500 3z" fill="#c8c8c8"/></svg>
<i style="left:0;top:13px;width:37px;height:1px;background:#686868"></i>
<i class="grip" style="left:9px;top:16px"></i>
<i class="hsep" style="left:0;top:80px;width:37px"></i>
<i class="grip" style="left:9px;top:85px"></i>
<i style="left:5px;top:93px;width:28px;height:23px;background:#3a3a3a;border-radius:3px;box-shadow:0 1px 0 rgba(255,255,255,.12),inset 0 1px 1px rgba(0,0,0,.4)"></i>
<i class="hsep" style="left:0;top:121px;width:37px"></i>
<i class="grip" style="left:9px;top:126px"></i>
<i class="hsep" style="left:0;top:163px;width:37px"></i>
<svg id="docksvg" style="left:0;top:0" width="37" height="200" viewBox="679 77 37 200">
<g fill="#d6d6d6">
<text x="690.500" y="121.500" font-family="Liberation Sans,sans-serif" font-size="20" fill="#dcdcdc" stroke="#dcdcdc" stroke-width=".5" textLength="13.500" lengthAdjust="spacingAndGlyphs">A</text><rect x="704.500" y="105.500" width="1" height="17" fill="#dcdcdc"/>
<path d="M697 134h7v15h-2v-13h-1.500v13h-2v-7.500c-6.500 0-6.500-7.500-1.500-7.500z"/>
<!-- 3D -->
<path d="M691 177l5-2.500 5 2.500v6l-5 2.500-5-2.500z" fill="none" stroke="#dcdcdc" stroke-width="1.200"/><path d="M691 177l5 2.500 5-2.500M696 179.500v6" fill="none" stroke="#dcdcdc" stroke-width="1"/>
<rect x="703" y="174" width="4" height="4"/><rect x="703" y="180" width="4" height="4"/><rect x="691" y="187.500" width="16" height="3.500"/><path d="M702.500 188.500h3l-1.500 2z" fill="#222"/>
<!-- history -->
<rect x="692" y="216" width="3.500" height="3.500" fill="none" stroke="#d0d0d0"/><rect x="692" y="222" width="3.500" height="3.500" fill="none" stroke="#d0d0d0"/><rect x="691.500" y="227.500" width="4.500" height="4.500"/>
<path d="M700 229c5-1 6-8 1-10.500" fill="none" stroke="#d6d6d6" stroke-width="1.800"/><path d="M699 217l4.500-1-1 4.500z"/>
</g></svg>
</div>
<!-- ===== RIGHT PANELS ===== -->
<div id="rp" style="left:719px;top:77px;width:267px;height:667px;background:#2b2b2b">
<i style="left:0;top:0;width:267px;height:12px;background:linear-gradient(#333,#424242)"></i>
<svg style="left:260px;top:4px" width="8" height="6"><path d="M0 0l3.500 3L0 6zM4 0l3.500 3L4 6z" fill="#c8c8c8"/></svg>
<!-- Color panel -->
<div class="tabbar" style="left:0;top:13px;width:267px;height:17px">
<div class="tab on" style="left:0;width:44px"><span class="t" style="left:7px">Color</span></div>
<div class="tab" style="left:44px;width:66px"><span class="t" style="left:6px">Swatches</span></div>
<svg style="left:252px;top:5px" width="14" height="8"><path d="M0 2h4L2 4.500z" fill="#ccc"/><path d="M5 .5h9M5 2.500h9M5 4.500h9M5 6.500h9" stroke="#ccc" stroke-width="1"/></svg>
</div>
<div class="pnl" style="left:0;top:30px;width:267px;height:118px">
<i style="left:16px;top:24px;width:18px;height:18px;background:#000;border:1px solid #eee"></i>
<i style="left:5px;top:13px;width:20px;height:20px;background:#fff;border:1px solid #333;box-shadow:0 0 0 1px #8a8a8a"></i>
<span class="t" style="left:45px;top:43px;font-size:13px">K</span>
<i style="left:59px;top:43px;width:140px;height:5px;background:linear-gradient(90deg,#fff,#000);border:1px solid #2c2c2c"></i>
<svg style="left:54px;top:48px" width="11" height="10"><path d="M5.500 .5l4.500 4.500v4H1V5z" fill="#b0b0b0" stroke="#2c2c2c" stroke-width=".8"/></svg>
<i class="fld" style="left:205px;top:38px;width:41px;height:21px"></i>
<span class="t" style="left:211px;top:42px;font-size:13px">0</span>
<span class="t" style="left:247px;top:43px;font-size:12px">%</span>
<i style="left:3px;top:97px;width:253px;height:15px;background:linear-gradient(rgba(255,255,255,.55),rgba(255,255,255,0) 45%,rgba(0,0,0,0) 55%,rgba(0,0,0,.8)),linear-gradient(90deg,#ee1c25 0,#f7941d 8%,#fff200 17%,#8dc63f 25%,#00a651 33%,#00a99d 42%,#00aeef 50%,#0072bc 58%,#2e3192 67%,#92278f 75%,#ec008c 84%,#ed145b 92%,#ed1c24 100%);border:1px solid #2c2c2c"></i>
<i style="left:247px;top:98px;width:8px;height:7px;background:#fff"></i><i style="left:247px;top:105px;width:8px;height:6px;background:#000"></i>
</div>
<!-- Adjustments panel -->
<div class="tabbar" style="left:0;top:151px;width:267px;height:18px">
<div class="tab on" style="left:0;width:85px"><span class="t" style="left:7px">Adjustments</span></div>
<div class="tab" style="left:85px;width:46px"><span class="t" style="left:6px">Styles</span></div>
<svg style="left:252px;top:6px" width="14" height="8"><path d="M0 2h4L2 4.500z" fill="#ccc"/><path d="M5 .5h9M5 2.500h9M5 4.500h9M5 6.500h9" stroke="#ccc" stroke-width="1"/></svg>
</div>
<div class="pnl" style="left:0;top:169px;width:267px;height:117px">
<span class="t b" style="left:8px;top:10px;font-size:12px;color:#f2f2f2">Add an adjustment</span>
<svg id="adjsvg" style="left:31px;top:26px" width="150" height="86" viewBox="750 272 150 86">
<defs><linearGradient id="bx" x1="0" y1="0" x2="1" y2="1"><stop offset="0" stop-color="#d8d8d8"/><stop offset="1" stop-color="#5a5a5a"/></linearGradient>
<linearGradient id="bh" x1="0" y1="0" x2="1" y2="0"><stop offset="0" stop-color="#4a4a4a"/><stop offset="1" stop-color="#cfcfcf"/></linearGradient>
<linearGradient id="bv" x1="0" y1="0" x2="0" y2="1"><stop offset="0" stop-color="#e4e4e4"/><stop offset="1" stop-color="#a8a8a8"/></linearGradient></defs>
<g stroke="#dedede" stroke-width="1.100" fill="url(#bx)">
<!-- row1 -->
<circle cx="777.500" cy="288.200" r="4.200" fill="none" stroke-width="1.300"/><path d="M777.500 284v8.400a4.200 4.200 0 0 0 0-8.400z" fill="#dedede" stroke="none"/>
<path d="M777.500 279.500v2.500M777.500 294.500v2.500M768.800 288.200h2.500M783.700 288.200h2.500M771.300 282l1.800 1.800M781.900 292.600l1.800 1.800M783.700 282l-1.800 1.800M773.100 292.600l-1.800 1.800" stroke-width="1.500" fill="none"/>
<path d="M793 293v-7l1.500 2.500 1.200-5.500 1.500 5 1.500-7 1.300 6 1.500-8 1.500 7.500 1.500-5 1.300 5.500 1.300-4.500 1.500 3.500 1.200-3 .5 3v7z" fill="url(#bv)" stroke="none"/>
<rect x="818.500" y="282.500" width="15" height="12" fill="#7e7e7e"/><path d="M818.500 286.500h15M818.500 290.500h15M823.500 282.500v12M828.500 282.500v12" stroke-width=".7" fill="none"/><path d="M819 294c7 0 6-11.500 14-11.500" fill="none" stroke="#f0f0f0" stroke-width="1.300"/>
<rect x="842.500" y="282.500" width="15" height="12" fill="#6a6a6a"/><path d="M843 294l14-11v11z" fill="#d8d8d8" stroke="none"/><path d="M844.500 286.200h4M846.500 284.200v4" stroke="#eee" stroke-width="1.100"/><path d="M851.500 291.500h4" stroke="#333" stroke-width="1.100"/>
<path d="M867.300 282.500h14.200l-7.100 13z" fill="#8a8a8a" stroke="#dcdcdc"/>
<!-- row2 -->
<rect x="758.500" y="308.800" width="15" height="13" fill="url(#bh)"/><rect x="759" y="309.300" width="14" height="5" fill="#b8b8b8" stroke="none"/><path d="M762 309.300v5M765.500 309.300v5M769 309.300v5" stroke="#8a8a8a" stroke-width="1.500"/><path d="M758.500 314.500h15" stroke-width=".8"/>
<path d="M789.600 308v3M783.500 311.500h12.200M784.500 312l-3 7.500h6zM794.700 312l-3 7.500h6z" fill="none" stroke-width="1.200"/><path d="M781.200 319.500h6.600c0 3.300-6.600 3.300-6.600 0zM791.400 319.500h6.600c0 3.300-6.600 3.300-6.600 0zM787.600 308h4v2.500h-4z" fill="#dcdcdc" stroke="none"/>
<rect x="806.500" y="308.800" width="15" height="13" fill="#4a4a4a"/><rect x="814" y="309.300" width="7" height="12" fill="#d6d6d6" stroke="none"/>
<rect x="829.300" y="309.500" width="13" height="9" fill="#bdbdbd" stroke="#dedede"/><rect x="831" y="307.800" width="4" height="2" fill="#dedede" stroke="none"/><circle cx="836" cy="313.500" r="2.300" fill="#777" stroke="#444" stroke-width=".8"/><circle cx="840.800" cy="318.300" r="4.800" fill="#a4a4a4" fill-opacity=".9" stroke="#e4e4e4" stroke-width="1"/>
<circle cx="861.700" cy="312.700" r="4.300" fill="#cfcfcf" stroke="#e6e6e6" stroke-width=".8"/><circle cx="858" cy="318" r="4.300" fill="#bdbdbd" stroke="#e6e6e6" stroke-width=".8"/><circle cx="865.400" cy="318" r="4.300" fill="#bdbdbd" stroke="#e6e6e6" stroke-width=".8"/><path d="M859.500 314.800h4.400l-1.500 2.400v3.500h-1.400v-3.500z" fill="#444" stroke="none"/>
<rect x="878.600" y="308.800" width="15" height="13" fill="#555"/><path d="M883.600 308.800v13M888.600 308.800v13M878.600 313.100h15M878.600 317.400h15" stroke="#dcdcdc" stroke-width="1" fill="none"/>
<!-- row3 -->
<rect x="770.300" y="336.200" width="15.400" height="12.200" fill="#4c4c4c"/><ellipse cx="778" cy="342.300" rx="5" ry="3" transform="rotate(-35 778 342.300)" fill="#d0d0d0" stroke="none"/><path d="M770.800 347.900l14.400-11.200" stroke-width="1"/>
<rect x="794.300" y="336.200" width="15.400" height="12.200" fill="#8c8c8c"/><path d="M795 346l10-9.500h3l-13 12zM799 348l10.500-9v3l-7 6z" fill="#cfcfcf" stroke="none" opacity=".8"/>
<rect x="818.500" y="336.200" width="15.400" height="12.200" fill="#d6d6d6"/><path d="M819.500 344.500h3v-2h3.500v-2h3.500v-2h3.500v3h-3v2h-3.500v2h-3.500v2h-3.500z" fill="#2c2c2c" stroke="none"/>
<rect x="842.500" y="336.200" width="15.400" height="12.200" fill="#8a8a8a"/><path d="M843 336.700l7.200 5.600-7.200 5.600zM857.400 336.700l-7.200 5.600 7.200 5.600z" fill="#d8d8d8" stroke="none"/>
<rect x="866.400" y="336.200" width="15.400" height="12.200" fill="url(#bh)"/>
</g></svg>
</div>
<!-- Layers panel -->
<div class="tabbar" style="left:0;top:288px;width:267px;height:18px">
<div class="tab on" style="left:0;width:50px"><span class="t" style="left:7px">Layers</span></div>
<div class="tab" style="left:50px;width:66px"><span class="t" style="left:6px">Channels</span></div>
<div class="tab" style="left:116px;width:44px"><span class="t" style="left:6px">Paths</span></div>
<svg style="left:252px;top:6px" width="14" height="8"><path d="M0 2h4L2 4.500z" fill="#ccc"/><path d="M5 .5h9M5 2.500h9M5 4.500h9M5 6.500h9" stroke="#ccc" stroke-width="1"/></svg>
</div>
<div id="lay" class="pnl" style="left:0;top:306px;width:267px;height:361px">
<!-- filter row -->
<div class="dd" style="left:5px;top:3px;width:104px;height:20px">
<svg style="left:7px;top:4px" width="11" height="12"><circle cx="6.200" cy="4.800" r="3.600" fill="none" stroke="#e0e0e0" stroke-width="1.500"/><path d="M3.800 7.500L1 10.800" stroke="#e0e0e0" stroke-width="1.800"/></svg>
<span class="t" style="left:20px">Kind</span><svg class="ud" style="left:92px;top:4px" viewBox="0 0 7 11"><path fill="#e6e6e6" d="M3.500 0L6.500 4H.5zM3.500 11L6.500 7H.5z"/></svg></div>
<svg id="fltsvg" style="left:126px;top:3px" width="141" height="22" viewBox="845 387 141 22">
<rect x="847.500" y="392.200" width="12" height="9.600" fill="#555" stroke="#dcdcdc" stroke-width="1.200"/><path d="M849 400.500l3-3.500 2 2 1.500-1.500 3 3z" fill="#dcdcdc"/><circle cx="856.500" cy="395" r="1" fill="#dcdcdc"/>
<circle cx="877" cy="397" r="5" fill="#555" stroke="#dcdcdc" stroke-width="1.300"/><path d="M873.500 400.500a5 5 0 0 1 7-7z" fill="#dcdcdc"/>
<text x="901" y="402.500" font-family="Liberation Serif,serif" font-weight="bold" font-size="15" text-anchor="middle" fill="#e0e0e0">T</text>
<rect x="921.500" y="393" width="8.500" height="8.500" fill="none" stroke="#dcdcdc" stroke-width="1.200"/><g fill="#dcdcdc"><rect x="920" y="391.500" width="3" height="3"/><rect x="928.500" y="391.500" width="3" height="3"/><rect x="920" y="400" width="3" height="3"/><rect x="928.500" y="400" width="3" height="3"/></g>
<path d="M947.500 391.500h5l3 3v7.500h-8z" fill="#777" stroke="#dcdcdc" stroke-width="1.100"/><rect x="944" y="396.500" width="6" height="6" fill="#cfcfcf"/>
<rect x="976.500" y="388.500" width="8" height="16" rx="1" fill="#3a3a3a" stroke="#2a2a2a"/><rect x="977.500" y="389.500" width="6" height="7" fill="#8e8e8e"/>
</svg>
<i style="left:0;top:27px;width:267px;height:1px;background:#3e3e3e"></i>
<!-- blend row -->
<div class="dd" style="left:5px;top:31px;width:145px;height:20px"><span class="t" style="left:6px">Normal</span><svg class="ud" style="left:134px;top:4px" viewBox="0 0 7 11"><path fill="#e6e6e6" d="M3.500 0L6.500 4H.5zM3.500 11L6.500 7H.5z"/></svg></div>
<span class="t" style="left:155px;top:35px">Opacity:</span>
<i class="fld" style="left:206px;top:31px;width:40px;height:20px;border-right:0"></i><span class="t" style="left:211px;top:35px;font-size:12.200px">100%</span>
<div class="dd" style="left:245px;top:31px;width:20px;height:20px;border-radius:0 3px 3px 0"><svg style="left:6px;top:8px" width="7" height="4"><path d="M0 0h7L3.500 4z" fill="#e6e6e6"/></svg></div>
<i style="left:0;top:55px;width:267px;height:1px;background:#3e3e3e"></i>
<!-- lock row -->
<span class="t" style="left:6px;top:63px">Lock:</span>
<svg id="locksvg" style="left:41px;top:60px" width="85" height="20" viewBox="760 444 85 20">
<g fill="#8e8e8e"><rect x="761.500" y="448.500" width="10.500" height="10.500" fill="#6e6e6e"/><rect x="761.500" y="448.500" width="3.500" height="3.500"/><rect x="768.500" y="448.500" width="3.500" height="3.500"/><rect x="765" y="452" width="3.500" height="3.500"/><rect x="761.500" y="455.500" width="3.500" height="3.500"/><rect x="768.500" y="455.500" width="3.500" height="3.500"/></g>
<path d="M781.500 459c3 1 6.500 0 6.500-3l-2-1.500c-1 2.500-2.500 3.800-4.500 4.500zM786.700 453.800l1.800 1.500 8.700-7.500-.5-.7z" fill="#9a9a9a"/>
<path d="M810.500 447.500l2.300 2.700h-1.600v3h3v-1.600l2.700 2.300-2.700 2.300v-1.600h-3v3h1.600l-2.300 2.700-2.300-2.700h1.600v-3h-3v1.600l-2.700-2.300 2.700-2.300v1.600h3v-3h-1.600z" fill="#dcdcdc"/>
<rect x="828.200" y="453.500" width="9.200" height="6.800" rx="1" fill="#dcdcdc"/><path d="M830.300 453.500v-2.200c0-3.300 5-3.300 5 0v2.200" fill="none" stroke="#dcdcdc" stroke-width="1.500"/><rect x="832.200" y="455.500" width="1.200" height="2.800" fill="#444"/>
</svg>
<span class="t" style="left:183px;top:62px">Fill:</span>
<i class="fld" style="left:206px;top:59px;width:40px;height:20px;border-right:0"></i><span class="t" style="left:211px;top:63px;font-size:12.200px">100%</span>
<div class="dd" style="left:245px;top:59px;width:20px;height:20px;border-radius:0 3px 3px 0"><svg style="left:6px;top:8px" width="7" height="4"><path d="M0 0h7L3.500 4z" fill="#e6e6e6"/></svg></div>
<i style="left:0;top:84px;width:267px;height:2px;background:#383838"></i>
<!-- layer list -->
<div id="rows" style="left:0;top:86px;width:256px;height:255px;background:#454545">
<div class="row" style="top:0"><i class="eyec"><svg class="eye" width="15" height="10" viewBox="0 0 15 10"><path d="M.5 5C3 .3 12 .3 14.500 5 12 9.700 3 9.700 .5 5z" fill="#d8d8d8"/><circle cx="7.500" cy="5" r="3.100" fill="#484848"/><circle cx="7.500" cy="5" r="1.500" fill="#bdbdbd"/><circle cx="6.500" cy="3.800" r=".9" fill="#eee"/></svg></i>
<svg style="left:40px;top:10px" width="20" height="18"><text x="9.500" y="16.500" font-family="Liberation Serif,serif" font-size="20" font-weight="bold" text-anchor="middle" fill="#dcdcdc">T</text></svg>
<span class="t" style="left:74px">Text</span></div>
<div class="row" style="top:39px"><i class="eyec"><svg class="eye" width="15" height="10" viewBox="0 0 15 10"><path d="M.5 5C3 .3 12 .3 14.500 5 12 9.700 3 9.700 .5 5z" fill="#d8d8d8"/><circle cx="7.500" cy="5" r="3.100" fill="#484848"/><circle cx="7.500" cy="5" r="1.500" fill="#bdbdbd"/><circle cx="6.500" cy="3.800" r=".9" fill="#eee"/></svg></i>
<i class="th" style="left:34px;top:3px;width:32px;height:32px;background:#fff repeating-conic-gradient(#ccc 0 25%,#fff 0 50%) 0 0/8px 8px"></i>
<svg style="left:50px;top:15px" width="12" height="6"><path d="M1 1.500h2M2 1v3M4 3c1-2 2-2 2 0M7 1.500c1.500 0 2 1 3.500 1M8 4h3" stroke="#777" stroke-width=".7" fill="none"/></svg>
<span class="t" style="left:74px">Rings</span></div>
<div class="row" style="top:78px"><i class="eyec"><svg class="eye" width="15" height="10" viewBox="0 0 15 10"><path d="M.5 5C3 .3 12 .3 14.500 5 12 9.700 3 9.700 .5 5z" fill="#d8d8d8"/><circle cx="7.500" cy="5" r="3.100" fill="#484848"/><circle cx="7.500" cy="5" r="1.500" fill="#bdbdbd"/><circle cx="6.500" cy="3.800" r=".9" fill="#eee"/></svg></i>
<svg style="left:40px;top:12px" width="20" height="13"><path d="M.5 12.500v-6l1.600 2 1.400-5.500 1.800 4.500 1.700-7 1.500 6 1.500-6.500 1.700 7 1.600-5 1.400 5.500 1.500-3.500 1.500 3 .5-1v6.500z" fill="#d0d0d0"/></svg><svg style="left:68px;top:11px" width="8.500" height="16" viewBox="0 0 9 17"><rect x="1.200" y="1" width="6.600" height="7" rx="2.400" fill="none" stroke="#d8d8d8" stroke-width="1.500"/><rect x="1.200" y="9" width="6.600" height="7" rx="2.400" fill="none" stroke="#d8d8d8" stroke-width="1.500"/><path d="M4.500 5.500v6" stroke="#d8d8d8" stroke-width="1.600"/></svg>
<i class="th" style="left:81px;top:3px;width:32px;height:32px;background:#fff"></i>
<span class="t" style="left:121px">Levels 1</span></div>
<div class="row" style="top:117px;background:#6a7b95"><i class="eyec"><svg class="eye" width="15" height="10" viewBox="0 0 15 10"><path d="M.5 5C3 .3 12 .3 14.500 5 12 9.700 3 9.700 .5 5z" fill="#d8d8d8"/><circle cx="7.500" cy="5" r="3.100" fill="#484848"/><circle cx="7.500" cy="5" r="1.500" fill="#bdbdbd"/><circle cx="6.500" cy="3.800" r=".9" fill="#eee"/></svg></i>
<svg style="left:41px;top:13px" width="17" height="13"><defs><linearGradient id="hsg" x1="0" x2="1"><stop offset="0" stop-color="#444"/><stop offset="1" stop-color="#d8d8d8"/></linearGradient></defs><rect x=".5" y=".5" width="16" height="12" fill="url(#hsg)" stroke="#e0e0e0"/><rect x="1" y="1" width="15" height="4.500" fill="#bdbdbd"/><path d="M4 1v4.500M8 1v4.500M12 1v4.500" stroke="#888" stroke-width="1.600"/><path d="M.5 5.800h16" stroke="#e0e0e0" stroke-width=".8"/></svg><svg style="left:68px;top:11px" width="8.500" height="16" viewBox="0 0 9 17"><rect x="1.200" y="1" width="6.600" height="7" rx="2.400" fill="none" stroke="#d8d8d8" stroke-width="1.500"/><rect x="1.200" y="9" width="6.600" height="7" rx="2.400" fill="none" stroke="#d8d8d8" stroke-width="1.500"/><path d="M4.500 5.500v6" stroke="#d8d8d8" stroke-width="1.600"/></svg>
<i class="th" style="left:81px;top:3px;width:32px;height:32px;background:#fff"></i>
<svg style="left:79px;top:1px" width="36" height="36"><path d="M.5 8V.5H8M28 .5h7.500V8M35.500 28v7.500H28M8 35.500H.5V28" fill="none" stroke="#f0f0f0" stroke-width="1"/></svg>
<span class="t" style="left:121px">Hue/Saturation 1</span></div>
<div class="row" style="top:156px"><i class="eyec"><svg class="eye" width="15" height="10" viewBox="0 0 15 10"><path d="M.5 5C3 .3 12 .3 14.500 5 12 9.700 3 9.700 .5 5z" fill="#d8d8d8"/><circle cx="7.500" cy="5" r="3.100" fill="#484848"/><circle cx="7.500" cy="5" r="1.500" fill="#bdbdbd"/><circle cx="6.500" cy="3.800" r=".9" fill="#eee"/></svg></i>
<svg class="th" style="left:34px;top:3px;border:0" width="32" height="32" viewBox="0 0 32 32"><defs><radialGradient id="tbg" cx=".6" cy=".4" r=".8"><stop offset="0" stop-color="#e2c0ae"/><stop offset="1" stop-color="#d2ac98"/></radialGradient></defs><rect width="32" height="32" fill="url(#tbg)"/><path d="M0 10h9.500l.5 7 2.500.3.200 7 2 .3.200 5.500 1.500.5V32H0z" fill="#f7f1dc"/><path d="M3 4.500h1.500v3.500H3z" fill="#2a2428"/><path d="M4.500 5h1.500v3H4.500z" fill="#eee"/><path d="M1 8.500h8v1.800H1z" fill="#f2c6c6"/><circle cx="11" cy="15.500" r="1.400" fill="#eeb0b0"/><circle cx="13.500" cy="23" r="1.500" fill="#eeb0b0"/><circle cx="12.500" cy="29.500" r="1.500" fill="#eeb0b0"/><circle cx="11.300" cy="15.300" r=".6" fill="#e8d040"/><circle cx="13.800" cy="23.200" r=".6" fill="#e8d040"/><rect x=".5" y=".5" width="31" height="31" fill="none" stroke="#1e1e1e"/></svg>
<span class="t" style="left:74px">Cake</span></div>
</div>
<!-- scrollbar -->
<i style="left:256px;top:86px;width:11px;height:255px;background:#4b4b4b;border-left:1px solid #383838"></i>
<!-- bottom bar -->
<div style="left:0;top:341px;width:267px;height:20px;background:#535353;border-top:1px solid #363636;border-bottom:1px solid #2a2a2a">
<svg id="lbsvg" style="left:60px;top:1px" width="190" height="18" viewBox="779 725 190 18">
<g fill="#d4d4d4">
<path d="M790.500 732h4.500M793.500 737.500h-3a2.700 2.700 0 0 1 0-5.500M795 732h3a2.700 2.700 0 0 1 0 5.500h-3M791.500 734.800h6" fill="none" stroke="#9c9c9c" stroke-width="1.500"/>
<text x="815" y="739.500" font-family="Liberation Serif,serif" font-style="italic" font-size="15" fill="#d8d8d8">fx</text><path d="M829.500 739h3l-1.500 2z"/>
<rect x="842" y="729.500" width="13" height="10.500"/><circle cx="848.500" cy="734.800" r="2.800" fill="#444"/>
<circle cx="874.500" cy="734.500" r="5" fill="#555" stroke="#d4d4d4" stroke-width="1.300"/><path d="M871 738a5 5 0 0 1 7-7z"/><path d="M883 739h3l-1.500 2z"/>
<path d="M896 729h5l1.500 1.500h6v8.500h-12.500z"/>
<path d="M923.500 729.500h10v10h-4.500l-5.500-5z"/><path d="M923.500 735.500l4.500 4.500h-4.500z" fill="#444"/>
<path d="M950 731.500h11v1.500h-11zM953.500 729.500h4v2h-4zM951 733.500h9l-.8 7h-7.400z"/><path d="M953.500 735v4.500M955.500 735v4.500M957.500 735v4.500" stroke="#444" stroke-width=".8"/>
</g></svg>
</div>
</div>
</div>

<!-- ===== PROPERTIES PANEL ===== -->
<div id="prop" style="left:392px;top:156px;width:286px;height:368px;background:#535353;border:1px solid #2a2a2a;box-shadow:0 2px 6px rgba(0,0,0,.45)">
<i style="left:0;top:0;width:284px;height:2px;background:#2e2e2e"></i>
<div class="tabbar" style="left:0;top:2px;width:284px;height:18px;background:#3e3e3e">
<div class="tab on" style="left:0;width:72px"><span class="t" style="left:8px;top:5px">Properties</span></div>
<svg style="left:244px;top:7px" width="9" height="7"><path d="M0 0l4 3.500L0 7zM4.500 0l4 3.500-4 3.500z" fill="#d0d0d0"/></svg>
<i style="left:259px;top:4px;width:3px;height:12px;border-left:1px solid #777;border-right:1px solid #777"></i>
<svg style="left:266px;top:6px" width="14" height="8"><path d="M0 2h4L2 4.500z" fill="#ccc"/><path d="M5 .5h9M5 2.500h9M5 4.500h9M5 6.500h9" stroke="#ccc" stroke-width="1"/></svg>
</div>
<div style="left:0;top:0;width:284px;height:0">
<i style="left:11px;top:27px;width:22px;height:22px;background:#3a3a3a;border-radius:2px;box-shadow:0 1px 0 rgba(255,255,255,.12),inset 0 1px 1px rgba(0,0,0,.4)"></i>
<svg style="left:14px;top:31px" width="17" height="13"><defs><linearGradient id="hsg2" x1="0" x2="1"><stop offset="0" stop-color="#444"/><stop offset="1" stop-color="#d8d8d8"/></linearGradient></defs><rect x=".5" y=".5" width="16" height="12" fill="url(#hsg2)" stroke="#e0e0e0"/><rect x="1" y="1" width="15" height="4.500" fill="#bdbdbd"/><path d="M4 1v4.500M8 1v4.500M12 1v4.500" stroke="#888" stroke-width="1.600"/><path d="M.5 5.800h16" stroke="#e0e0e0" stroke-width=".8"/></svg>
<svg style="left:37px;top:30px" width="18" height="14"><rect x=".5" y=".5" width="17" height="13" fill="#cfcfcf" stroke="#e6e6e6"/><circle cx="9" cy="7" r="3.300" fill="#3a3a3a"/></svg>
<span class="t b" style="left:62px;top:33px;font-size:12.200px;color:#f4f4f4">Hue/Saturation</span>
<i style="left:0;top:52px;width:270px;height:1px;background:#3e3e3e"></i>
<span class="t" style="left:8px;top:67px">Preset:</span>
<div class="dd" style="left:53px;top:63px;width:209px;height:20px"><span class="t" style="left:7px">Custom</span><svg class="ud" style="left:197px;top:4px" viewBox="0 0 7 11"><path fill="#e6e6e6" d="M3.500 0L6.500 4H.5zM3.500 11L6.500 7H.5z"/></svg></div>
<svg style="left:11px;top:90px" width="19" height="19" viewBox="0 0 19 19"><path d="M5.500 18l-3.800-6c-.7-1.200.7-2 1.600-1l2 2.200V6.500c0-1.400 1.800-1.400 1.900 0l.3 4 .3-5.300c0-1.400 1.900-1.400 1.900 0l.3 5.300.6-4.300c.2-1.300 1.900-1.100 1.800.2l-.2 4.800 1-2.800c.5-1.200 2-.7 1.700.5l-1.500 6-.6 3.100z" fill="#dcdcdc"/><path d="M4.500 2.500L1.500 4.300l3 1.800zM10.500 2.500l3 1.800-3 1.800z" fill="#dcdcdc"/></svg>
<div class="dd" style="left:42px;top:90px;width:220px;height:20px"><span class="t" style="left:7px">Master</span><svg class="ud" style="left:208px;top:4px" viewBox="0 0 7 11"><path fill="#e6e6e6" d="M3.500 0L6.500 4H.5zM3.500 11L6.500 7H.5z"/></svg></div>
<!-- Hue -->
<span class="t" style="left:8px;top:124px">Hue:</span>
<i class="fld" style="left:217px;top:120px;width:45px;height:20px"></i><span class="t" style="left:222px;top:124px">0</span>
<i style="left:17px;top:146px;width:237px;height:4px;border-radius:2px;background:linear-gradient(90deg,#f00,#ff0 17%,#0f0 33%,#0ff 50%,#00f 67%,#f0f 83%,#f00);box-shadow:0 0 0 1px #2e2e2e"></i><svg style="left:129px;top:148px" width="11" height="10"><path d="M5.500 .5l4.500 4.500v4H1V5z" fill="#b4b4b4" stroke="#2c2c2c" stroke-width=".8"/></svg>
<!-- Saturation -->
<span class="t" style="left:8px;top:169px">Saturation:</span>
<i class="fld" style="left:217px;top:164px;width:45px;height:20px"></i><span class="t" style="left:222px;top:168px">+20</span>
<i style="left:17px;top:190px;width:237px;height:4px;border-radius:2px;background:linear-gradient(90deg,#7d7d7d,#f00);box-shadow:0 0 0 1px #2e2e2e"></i><svg style="left:153px;top:192px" width="11" height="10"><path d="M5.500 .5l4.500 4.500v4H1V5z" fill="#b4b4b4" stroke="#2c2c2c" stroke-width=".8"/></svg>
<!-- Lightness -->
<span class="t" style="left:8px;top:212px">Lightness:</span>
<i class="fld" style="left:217px;top:208px;width:45px;height:20px"></i><span class="t" style="left:222px;top:212px">0</span>
<i style="left:17px;top:234px;width:237px;height:4px;border-radius:2px;background:linear-gradient(90deg,#000,#fff);box-shadow:0 0 0 1px #2e2e2e"></i><svg style="left:129px;top:236px" width="11" height="10"><path d="M5.500 .5l4.500 4.500v4H1V5z" fill="#b4b4b4" stroke="#2c2c2c" stroke-width=".8"/></svg>
<!-- droppers -->
<svg style="left:13px;top:258px" width="16" height="17" viewBox="0 0 16 17"><path d="M.8 16l.3-2.300 7-7 2 2-7 7z" fill="none" stroke="#8c8c8c" stroke-width="1.100"/><path d="M7 5.500l1.600-1.600 4 4L11 9.500zM10 4l2.600-3c1.200-1.200 3.600 1 2.400 2.400l-3 2.600z" fill="#8c8c8c"/></svg><svg style="left:39px;top:258px" width="16" height="17" viewBox="0 0 16 17"><path d="M.8 16l.3-2.300 7-7 2 2-7 7z" fill="none" stroke="#8c8c8c" stroke-width="1.100"/><path d="M7 5.500l1.600-1.600 4 4L11 9.500zM10 4l2.600-3c1.200-1.200 3.600 1 2.400 2.400l-3 2.600z" fill="#8c8c8c"/><path d="M11 14h4M13 12v4" stroke="#8c8c8c" stroke-width="1"/></svg><svg style="left:65px;top:258px" width="16" height="17" viewBox="0 0 16 17"><path d="M.8 16l.3-2.300 7-7 2 2-7 7z" fill="none" stroke="#8c8c8c" stroke-width="1.100"/><path d="M7 5.500l1.600-1.600 4 4L11 9.500zM10 4l2.600-3c1.200-1.200 3.600 1 2.400 2.400l-3 2.600z" fill="#8c8c8c"/><path d="M11 14h4" stroke="#8c8c8c" stroke-width="1"/></svg>
<i class="cb" style="left:98px;top:260px"></i>
<span class="t" style="left:116px;top:261px">Colorize</span>
<i style="left:11px;top:298px;width:248px;height:5px;background:linear-gradient(90deg,#0ff,#00f 17%,#f0f 33%,#f00 50%,#ff0 67%,#0f0 83%,#0ff)"></i>
<i style="left:11px;top:309px;width:248px;height:6px;background:linear-gradient(90deg,#0ff,#00f 17%,#f0f 33%,#f00 50%,#ff0 67%,#0f0 83%,#0ff)"></i>
<!-- scrollbar -->
<i style="left:270px;top:53px;width:14px;height:285px;background:#4a4a4a;border-left:1px solid #3a3a3a"></i>
<i style="left:273px;top:57px;width:8px;height:266px;border-radius:4px;background:linear-gradient(90deg,#7a7a7a,#6a6a6a);box-shadow:0 0 0 1px #333"></i>
<!-- bottom bar -->
<div style="left:0;top:338px;width:284px;height:21px;background:#535353;border-top:1px solid #363636;border-bottom:1px solid #363636">
<i style="left:207px;top:0;width:29px;height:19px;background:#3c3c3c"></i>
<svg id="pbsvg" style="left:117px;top:0" width="167" height="19" viewBox="510 496 167 19">
<g fill="#d8d8d8">
<rect x="520" y="499.500" width="11" height="11" fill="#cfcfcf"/><path d="M514 502v5.500h4" fill="none" stroke="#d8d8d8" stroke-width="1.200"/><path d="M516.500 505l3 2.500-3 2.500zM512.500 503.500h3l-1.500-2z"/>
<path d="M543 505c2.500-4.500 9.500-4.500 12 0-2.500 4.500-9.500 4.500-12 0z"/><circle cx="549" cy="505" r="2.600" fill="#484848"/><circle cx="549" cy="505" r="1.100" fill="#ccc"/><path d="M557 500.500c3.500 2 3.500 7 .5 9.500" fill="none" stroke="#d8d8d8" stroke-width="1.400"/><path d="M555 509l4.500 2-1-4.500z"/>
<path d="M578 505.500a4.300 4.300 0 1 0 4.300-4.500" fill="none" stroke="#d8d8d8" stroke-width="1.500"/><path d="M582.800 498l-4 3 4 3z"/><path d="M575 512.500h12" stroke="#d8d8d8" stroke-width="1.300"/>
<path d="M606.500 505c2.800-4.500 10.200-4.500 13 0-2.800 4.500-10.200 4.500-13 0z"/><circle cx="613" cy="505" r="2.800" fill="#3c3c3c"/><circle cx="613" cy="505" r="1.200" fill="#ccc"/>
<path d="M635.500 501h11.500v1.500h-11.500zM639.200 499h4v2h-4zM636.500 503h9.500l-.8 8h-7.900z"/><path d="M639.200 504.500v5M641.200 504.500v5M643.200 504.500v5" stroke="#444" stroke-width=".8"/>
<path d="M675 505v1M673 507v1M675 507v1M671 509v1M673 509v1M675 509v1M669 511v1M671 511v1M673 511v1M675 511v1" stroke="#8a8a8a" stroke-width="1"/>
</g></svg>
</div>
<i class="grip" style="left:132px;top:361px;width:20px;height:4px"></i>
</div>
</div>
<!-- cursor -->
<svg style="left:550px;top:356px" width="16" height="21" viewBox="0 0 16 21"><path d="M2 1.500v15l3.500-3.200 2.600 6 2.400-1-2.600-5.800h4.800z" fill="#111" stroke="#fff" stroke-width="1.200"/></svg>

<!-- ===== LEFT TOOLBAR ===== -->
<div id="tools" style="left:0;top:77px;width:40px;height:667px;background:#535353;border-right:3px solid #2b2b2b">
<i style="left:0;top:0;width:37px;height:12px;background:linear-gradient(#333,#424242);border-bottom:1px solid #2b2b2b"></i>
<i style="left:0;top:13px;width:37px;height:1px;background:#686868"></i>
<i style="left:9px;top:16px;width:20px;height:4px;background:repeating-linear-gradient(90deg,#303030 0 1px,transparent 1px 2px)"></i>
<i style="left:3px;top:29px;width:31px;height:24px;background:#3a3a3a;border-radius:3px;box-shadow:0 1px 0 rgba(255,255,255,.12),inset 0 1px 1px rgba(0,0,0,.4)"></i>
<i style="left:4px;top:185px;width:29px;height:1px;background:#383838"></i>
<i style="left:4px;top:396px;width:29px;height:1px;background:#383838"></i>
<i style="left:4px;top:503px;width:29px;height:1px;background:#383838"></i>
<svg id="toolsvg" style="left:0;top:0" width="40" height="667" viewBox="0 77 40 667">
<defs><linearGradient id="ig" x1="0" y1="0" x2="0" y2="1"><stop offset="0" stop-color="#e4e4e4"/><stop offset="1" stop-color="#b4b4b4"/></linearGradient>
<path id="corner" d="M0 3L3 0V3z" fill="#9a9a9a"/></defs>
<g fill="url(#ig)" stroke="none">
<!-- collapse arrows -->
<path d="M4 80l3.500 3L4 86zM8 80l3.500 3L8 86z" fill="#c8c8c8"/>
<!-- move tool -->
<path d="M10 110.500l7.800 6.300-4.400.5-3.400 3.700z"/>
<path d="M22.700 114l1.900 2.200h-1.300v2.700h2.700v-1.300l2.200 1.900-2.200 1.900v-1.300h-2.700v2.700h1.300l-1.900 2.200-1.900-2.200h1.300v-2.700h-2.700v1.300l-2.200-1.900 2.200-1.900v1.300h2.700v-2.700h-1.300z"/>
<!-- marquee -->
<rect x="11.700" y="137.700" width="13" height="12" fill="none" stroke="#dcdcdc" stroke-width="1.400" stroke-dasharray="3.200 1.800" stroke-dashoffset="1.600"/>
<use href="#corner" x="28" y="150"/>
<!-- lasso -->
<ellipse cx="18" cy="167.500" rx="7.800" ry="4.800" fill="none" stroke="#d4d4d4" stroke-width="1.300" transform="rotate(-12 18 167.500)"/>
<path d="M11.500 171.500c-1.500 0-1.500 2 0 2s2-1.500 .5-2.200M12.500 173c1.500 1 1.800 2.500 .8 4.500" fill="none" stroke="#d4d4d4" stroke-width="1.200"/>
<use href="#corner" x="28" y="176"/>
<!-- quick select -->
<circle cx="14" cy="196.300" r="4.600" fill="none" stroke="#dcdcdc" stroke-width="1.300" stroke-dasharray="1.200 1.200"/>
<path d="M12.500 200.500c3 1.600 8 .8 8.800-2.500l-3-3c-1.500 3-3 4.500-5.800 5.500zM19 194.300l2.400 2.400 6.600-6c.9-1.100-.8-2.600-1.800-1.700z"/>
<use href="#corner" x="28" y="202"/>
<!-- crop -->
<rect x="15.400" y="218.700" width="4.600" height="4.600" fill="#3c3c3c"/>
<path d="M14.200 213.600V224.300H25M10 217.500H21.200V228.500" fill="none" stroke="#d6d6d6" stroke-width="2.400"/>
<path d="M15.600 223.200L24.800 214" stroke="#cfcfcf" stroke-width="1" fill="none"/>
<use href="#corner" x="28" y="228"/>
<!-- eyedropper -->
<path d="M11 255.500l.3-2.300 7.200-7.200 2 2-7.200 7.200z" fill="none" stroke="#d8d8d8" stroke-width="1.200"/>
<path d="M17.300 245l1.700-1.700 4.200 4.200-1.700 1.700zM20.500 243.500l2.800-3.200c1.300-1.300 3.800 1 2.600 2.500l-3.200 2.900z"/>
<use href="#corner" x="28" y="254"/>
<!-- spot healing -->
<path d="M13 283c-4-4-4-10-2-12.500s6-1.500 6.500.5" fill="none" stroke="#dcdcdc" stroke-width="1.200" stroke-dasharray="1.200 1.200"/>
<rect x="10.800" y="273" width="18" height="8" rx="4" transform="rotate(-42 19.800 277)" fill="#c6c6c6" stroke="#e4e4e4" stroke-width=".6"/>
<g fill="#6a6a6a"><circle cx="18" cy="276.500" r=".7"/><circle cx="20.300" cy="278" r=".7"/><circle cx="19.500" cy="275.200" r=".7"/><circle cx="17.300" cy="279" r=".7"/><circle cx="21" cy="276" r=".7"/><circle cx="15" cy="280.500" r=".7"/><circle cx="23.500" cy="273" r=".7"/><circle cx="14" cy="282.500" r=".7"/><circle cx="24.500" cy="271.500" r=".7"/></g>
<use href="#corner" x="28" y="283"/>
<!-- brush -->
<path d="M9.300 307.800c3.200 3 9.200 2 9.600-2.300l-3-2.700c-1.500 3-3.200 4.500-6.600 5zM16.800 302l2.800 2.500 7.600-9c.8-1-.5-2.100-1.400-1.300z"/>
<use href="#corner" x="28" y="309"/>
<!-- stamp -->
<path d="M10 329.500h5.800c0-2-1.600-3-1.600-5.500 0-4.600 6.600-4.600 6.600 0 0 2.500-1.600 3.500-1.600 5.500h5.800v4.500h-15zM10.500 335.500h14v1.500h-14z"/>
<use href="#corner" x="28" y="335"/>
<!-- history brush -->
<path d="M10.300 360.500c3 2 7.600 1.300 8-2.300l-2.500-2.200c-1.400 2.600-2.800 4-5.500 4.500zM16.500 355l2.400 2 7.300-8.800c.7-1-.5-1.900-1.300-1.100z"/>
<path d="M14.500 350.500c2-2 6-2.500 8.500-.5" fill="none" stroke="#d0d0d0" stroke-width="1.700"/>
<path d="M10.500 351l4.800-3.500.2 5.500z"/>
<path d="M23.500 354l.5 6M22 356v4" stroke="#222" stroke-width="1" stroke-dasharray="1 1" fill="none"/>
<use href="#corner" x="28" y="361"/>
<!-- eraser -->
<path d="M11 380.500l6.500-6.500h9.500l-6.500 6.500z" fill="#d6d6d6"/><path d="M11 380.500h9.500v6h-9.500z" fill="#bdbdbd"/><path d="M20.500 380.500l6.500-6.500v5l-6.500 7.500z" fill="#9c9c9c"/>
<use href="#corner" x="28" y="387"/>
<!-- paint bucket -->
<path d="M10.500 407.500l6.500-5 7.500 5.500-7 6c-2 1.500-4 .5-5.500-1.500s-2.500-4-1.500-5z"/>
<path d="M15.500 405v-4.500c0-3 3.500-3 3.500 0v6" fill="none" stroke="#e4e4e4" stroke-width="1.200"/>
<path d="M24.500 408c1.500.5 2.300 2.500 2.300 4.500s-2.300 2-2.300 0 .5-2.500 0-4.500z" fill="#e0e0e0"/>
<use href="#corner" x="28" y="413"/>
<!-- smudge -->
<rect x="12.300" y="424.500" width="13.200" height="9.500" rx="4"/>
<rect x="19" y="430" width="6.500" height="7" rx="3"/>
<path d="M19 431.500L12.600 439.800" stroke="#d2d2d2" stroke-width="3.600" stroke-linecap="round" fill="none"/>
<path d="M21.800 430.500L16 438.500" stroke="#585858" stroke-width="1" fill="none"/>
<use href="#corner" x="28" y="439"/>
<!-- dodge -->
<circle cx="16" cy="456.800" r="5.300"/><path d="M19.500 460l5.500 5.500" stroke="#d0d0d0" stroke-width="2.200" fill="none"/>
<use href="#corner" x="28" y="465"/>
<!-- pen -->
<path d="M10 495.500l2.200-10 7.300-5 5 5-5 7.300zM20.800 479.300l2.200-2.300 5 5-2.300 2.200z"/>
<path d="M10.300 495.200l6.200-6.200" stroke="#333" stroke-width=".9" fill="none"/><circle cx="17" cy="488.500" r="1.200" fill="#333"/>
<use href="#corner" x="28" y="493"/>
<!-- path select arrow -->
<path d="M12.800 533v13l3.200-2.800 2.200 4.800 2.200-1-2.200-4.600h4.300z" fill="#1a1a1a" stroke="#e8e8e8" stroke-width="1.100"/>
<use href="#corner" x="28" y="545"/>
<!-- rectangle -->
<rect x="11.400" y="560.200" width="13.600" height="11.400" fill="#8a8a8a" stroke="#e0e0e0" stroke-width="1"/>
<rect x="12" y="560.800" width="12.400" height="5" fill="#9a9a9a" opacity=".6"/>
<use href="#corner" x="28" y="571"/>
<!-- hand -->
<path d="M14.500 602.300l-4.800-7c-.8-1.300.8-2.300 1.800-1.200l2.500 2.700v-7c0-1.500 2-1.500 2.100 0l.4 4.500.4-6c0-1.500 2.100-1.500 2.100 0l.3 6 .8-5c.2-1.400 2.100-1.200 2 .2l-.3 5.500 1.300-3.500c.5-1.300 2.200-.8 1.900.6l-1.800 6.700-.7 3.500z"/>
<use href="#corner" x="28" y="599"/>
<!-- zoom -->
<circle cx="16.500" cy="618.300" r="4.700" fill="#8e8e8e" stroke="#d8d8d8" stroke-width="1.600"/><path d="M20 622l5.500 5.700" stroke="#d4d4d4" stroke-width="2.400" stroke-linecap="round" fill="none"/>
<!-- default colours -->
<rect x="3" y="636.500" width="7" height="7" fill="#cfcfcf"/><rect x="6.500" y="640" width="6" height="6" fill="#222" stroke="#cfcfcf" stroke-width="1"/>
<!-- swap -->
<path d="M23.500 638.500c4-0.500 5.500 1 5.500 4.500" fill="none" stroke="#d8d8d8" stroke-width="1.300"/><path d="M21 638.500l3.500-2.500v5zM29 646.500l-2.700-3.500h5.400z" fill="#d8d8d8"/>
<!-- fg / bg -->
<rect x="14" y="662.500" width="18" height="18" fill="#000" stroke="#f2f2f2" stroke-width="1"/>
<rect x="3.500" y="652.500" width="19" height="19" fill="#fff" stroke="#3a3a3a" stroke-width="1"/>
<!-- quick mask -->
<rect x="9.400" y="691.500" width="16.200" height="12" fill="#333" stroke="#dcdcdc" stroke-width="1"/><circle cx="17.500" cy="697.500" r="3.800" fill="none" stroke="#e6e6e6" stroke-width="1.100" stroke-dasharray="1 1.100"/>
<!-- screen mode -->
<rect x="9.500" y="720.500" width="11" height="9.500" fill="#777" stroke="#dcdcdc" stroke-width="1"/><rect x="14.500" y="717" width="11" height="9.500" fill="#8c8c8c" stroke="#dcdcdc" stroke-width="1"/>
<use href="#corner" x="28" y="734"/>
</g>
<text x="18" y="520" font-family="Liberation Serif,serif" font-size="18.500" text-anchor="middle" fill="#d8d8d8">T</text><use href="#corner" x="28" y="519"/>
</svg>
</div>
</body></html>
